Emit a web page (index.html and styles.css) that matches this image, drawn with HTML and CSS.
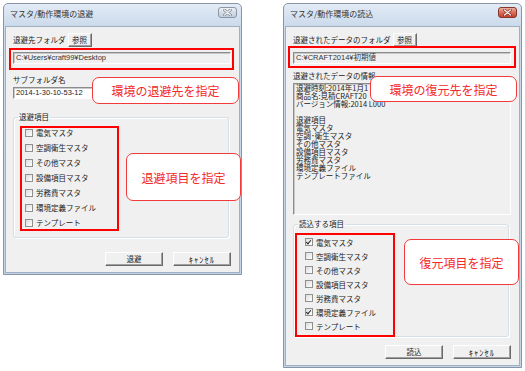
FILE: index.html
```html
<!DOCTYPE html>
<html lang="ja">
<head>
    <meta charset="UTF-8">
    <title>マスタ/動作環境の退避・読込</title>
    <link rel="stylesheet" href="styles.css">
</head>
<body>
    <div class="desk">
        <!-- 退避ダイアログ -->
        <div class="window window-save">
            <div class="titlebar">
                <span class="title">マスタ/動作環境の退避</span>
                <span class="close">
                    <svg width="9" height="7" viewBox="0 0 9 7">
                        <path d="M1.5 1 L7.5 6 M7.5 1 L1.5 6" stroke="#7a8593" stroke-width="2.6" stroke-linecap="round"/>
                        <path d="M1.5 1 L7.5 6 M7.5 1 L1.5 6" stroke="#f4f6f9" stroke-width="1.2" stroke-linecap="round"/>
                    </svg>
                </span>
            </div>
            <div class="client">
                <div class="row">
                    <span class="label">退避先フォルダ</span>
                    <button class="btn btn-browse">参照</button>
                </div>
                <div class="field field-disabled">C:¥Users¥craft99¥Desktop</div>
                <div class="label label-block">サブフォルダ名</div>
                <div class="field field-sub">2014-1-30-10-53-12</div>
                <fieldset class="group group-save">
                    <legend>退避項目</legend>
                    <ul class="checks">
                        <li><span class="check"></span>電気マスタ</li>
                        <li><span class="check"></span>空調衛生マスタ</li>
                        <li><span class="check"></span>その他マスタ</li>
                        <li><span class="check"></span>設備項目マスタ</li>
                        <li><span class="check"></span>労務費マスタ</li>
                        <li><span class="check"></span>環境定義ファイル</li>
                        <li><span class="check"></span>テンプレート</li>
                    </ul>
                </fieldset>
                <div class="actions">
                    <button class="btn">退避</button>
                    <button class="btn btn-cancel">ｷｬﾝｾﾙ</button>
                </div>
            </div>
            <div class="mark save-path"></div>
            <div class="callout save-dest">環境の退避先を指定</div>
            <div class="mark save-items"></div>
            <div class="callout save-what">退避項目を指定</div>
        </div>

        <!-- 読込ダイアログ -->
        <div class="window window-load">
            <div class="titlebar">
                <span class="title">マスタ/動作環境の読込</span>
                <span class="close close-hot">
                    <svg width="9" height="7" viewBox="0 0 9 7">
                        <path d="M1.5 1 L7.5 6 M7.5 1 L1.5 6" stroke="#8a2a1e" stroke-width="2.6" stroke-linecap="round"/>
                        <path d="M1.5 1 L7.5 6 M7.5 1 L1.5 6" stroke="#ffffff" stroke-width="1.2" stroke-linecap="round"/>
                    </svg>
                </span>
            </div>
            <div class="client">
                <div class="row">
                    <span class="label">退避されたデータのフォルダ</span>
                    <button class="btn btn-browse">参照</button>
                </div>
                <div class="field field-disabled">C:¥CRAFT2014¥初期値</div>
                <div class="label label-info">退避されたデータの情報</div>
                <div class="info">退避時刻:2014年1月1
商品名:見積CRAFT20
バージョン情報:2014 L000

退避項目
電気マスタ
空調･衛生マスタ
その他マスタ
設備項目マスタ
労務費マスタ
環境定義ファイル
テンプレートファイル</div>
                <fieldset class="group group-load">
                    <legend>読込する項目</legend>
                    <ul class="checks">
                        <li><span class="check checked"></span>電気マスタ</li>
                        <li><span class="check"></span>空調衛生マスタ</li>
                        <li><span class="check"></span>その他マスタ</li>
                        <li><span class="check"></span>設備項目マスタ</li>
                        <li><span class="check"></span>労務費マスタ</li>
                        <li><span class="check checked"></span>環境定義ファイル</li>
                        <li><span class="check"></span>テンプレート</li>
                    </ul>
                </fieldset>
                <div class="actions">
                    <button class="btn">読込</button>
                    <button class="btn btn-cancel">ｷｬﾝｾﾙ</button>
                </div>
            </div>
            <div class="mark load-path"></div>
            <div class="callout load-dest">環境の復元先を指定</div>
            <div class="mark load-items"></div>
            <div class="callout load-what">復元項目を指定</div>
        </div>
    </div>
</body>
</html>
```

FILE: styles.css
```css
body {
    margin: 0;
    background: #fff;
    font-family: "Noto Sans CJK JP", "Liberation Sans", sans-serif;
    color: #222;
}
.desk {
    display: flex;
    align-items: flex-start;
    gap: 41px;
    padding: 3px;
}
.window {
    position: relative;
    width: 239px;
    box-sizing: border-box;
    border: 1px solid #8895a6;
    border-radius: 5px 5px 0 0;
    background: linear-gradient(#e2ebf6, #cbdaeb 22px, #c3d4e8);
    padding: 0 1px 1px;
}
.titlebar {
    height: 22px;
    display: flex;
    justify-content: space-between;
    padding: 0 3px 0 5px;
}
.title {
    font-size: 8px;
    line-height: 20px;
    color: #333;
}
.close {
    margin-top: 3px;
    width: 19px;
    height: 11px;
    box-sizing: border-box;
    border: 1px solid #8a96a6;
    border-radius: 3px;
    background: linear-gradient(#eef2f7, #d3dbe6 50%, #c4cedb);
    display: flex;
    align-items: center;
    justify-content: center;
}
.close-hot {
    border-color: #86362b;
    background: linear-gradient(#eeb0a2, #d8705c 50%, #c4412c);
}
.client {
    background: #f0f0f0;
    border: 1px solid #9fb0c3;
    padding: 6px 8px 6px 7px;
}
.label {
    font-size: 7.5px;
    line-height: 10px;
    color: #222;
}
.label-block {
    margin-top: 11px;
}
.label-info {
    margin-top: 7px;
}
.row {
    display: flex;
    align-items: center;
    height: 14px;
}
.btn {
    font-family: inherit;
    font-size: 7.5px;
    color: #222;
    background: #f0f0f0;
    border: 1px solid;
    border-color: #fff #6a6a6a #6a6a6a #fff;
    box-shadow: inset -1px -1px #a0a0a0;
    padding: 0;
    width: 58px;
    height: 14px;
    line-height: 12px;
}
.btn-cancel {
    font-size: 8.5px;
    letter-spacing: 1px;
}
.btn-browse {
    width: 24px;
    margin-left: 2px;
}
.field {
    margin-top: 5px;
    height: 12px;
    box-sizing: border-box;
    border: 1px solid;
    border-color: #8c8c8c #fff #fff #8c8c8c;
    box-shadow: inset 1px 1px #c8c8c8;
    font-family: "Liberation Sans", "Noto Sans CJK JP", sans-serif;
    font-size: 7.5px;
    line-height: 10px;
    padding-left: 2px;
    white-space: nowrap;
    overflow: hidden;
}
.field-disabled {
    background: #f0f0f0;
    color: #333;
}
.field-sub {
    margin-top: 2px;
    width: 100px;
    background: #fff;
}
.info {
    margin-top: 2px;
    height: 132px;
    box-sizing: border-box;
    border: 1px solid;
    border-color: #8c8c8c #fff #fff #8c8c8c;
    box-shadow: inset 1px 1px #c8c8c8;
    background: #f0f0f0;
    padding: 0 2px;
    font-size: 7.5px;
    line-height: 8px;
    white-space: pre;
    overflow: hidden;
    color: #222;
}
.group {
    margin: 13px 2px 0 0;
    padding: 3px 4px 7px;
    border: 1px solid #d5dfe5;
    border-radius: 3px;
    box-shadow: 1px 1px #fff, inset 1px 1px #fff;
}
.group legend {
    font-size: 7.5px;
    line-height: 10px;
    padding: 0 1px;
}
.group-load {
    margin-top: 4px;
    padding: 6px 4px 3px;
}
.checks {
    list-style: none;
    margin: 0;
    padding: 0 0 0 7px;
}
.checks li {
    height: 15px;
    display: flex;
    align-items: center;
    font-size: 7.5px;
}
.group-load .checks li {
    height: 14px;
}
.check {
    width: 8px;
    height: 8px;
    box-sizing: border-box;
    border: 1px solid #8e8f8f;
    background: linear-gradient(135deg, #dcdcdc, #fff);
    margin-right: 3px;
    position: relative;
}
.check.checked::after {
    content: "";
    position: absolute;
    left: 1px;
    top: 0;
    width: 2px;
    height: 4px;
    border: solid #222;
    border-width: 0 1.5px 1.5px 0;
    transform: rotate(40deg);
}
.actions {
    display: flex;
    justify-content: flex-end;
    gap: 10px;
    margin-top: 14px;
}
.window-load .actions {
    margin-top: 8px;
}

/* 注釈（赤枠・吹き出し） */
.mark {
    position: absolute;
    box-sizing: border-box;
    border: 2px solid #ff0000;
}
.callout {
    position: absolute;
    box-sizing: border-box;
    border: 1.5px solid #f23a3a;
    border-radius: 7px;
    background: #fff;
    color: #f42a2a;
    font-size: 12px;
    display: flex;
    align-items: center;
    justify-content: center;
}
.save-path { left: 5px; top: 44px; width: 225px; height: 22px; }
.save-dest { left: 88px; top: 73px; width: 147px; height: 27px; }
.save-items { left: 16px; top: 122px; width: 99px; height: 105px; }
.save-what { left: 122px; top: 149px; width: 115px; height: 48px; }
.load-path { left: 4px; top: 42px; width: 228px; height: 22px; }
.load-dest { left: 86px; top: 72px; width: 147px; height: 26px; }
.load-items { left: 11px; top: 229px; width: 100px; height: 104px; }
.load-what { left: 120px; top: 235px; width: 115px; height: 46px; }
```
